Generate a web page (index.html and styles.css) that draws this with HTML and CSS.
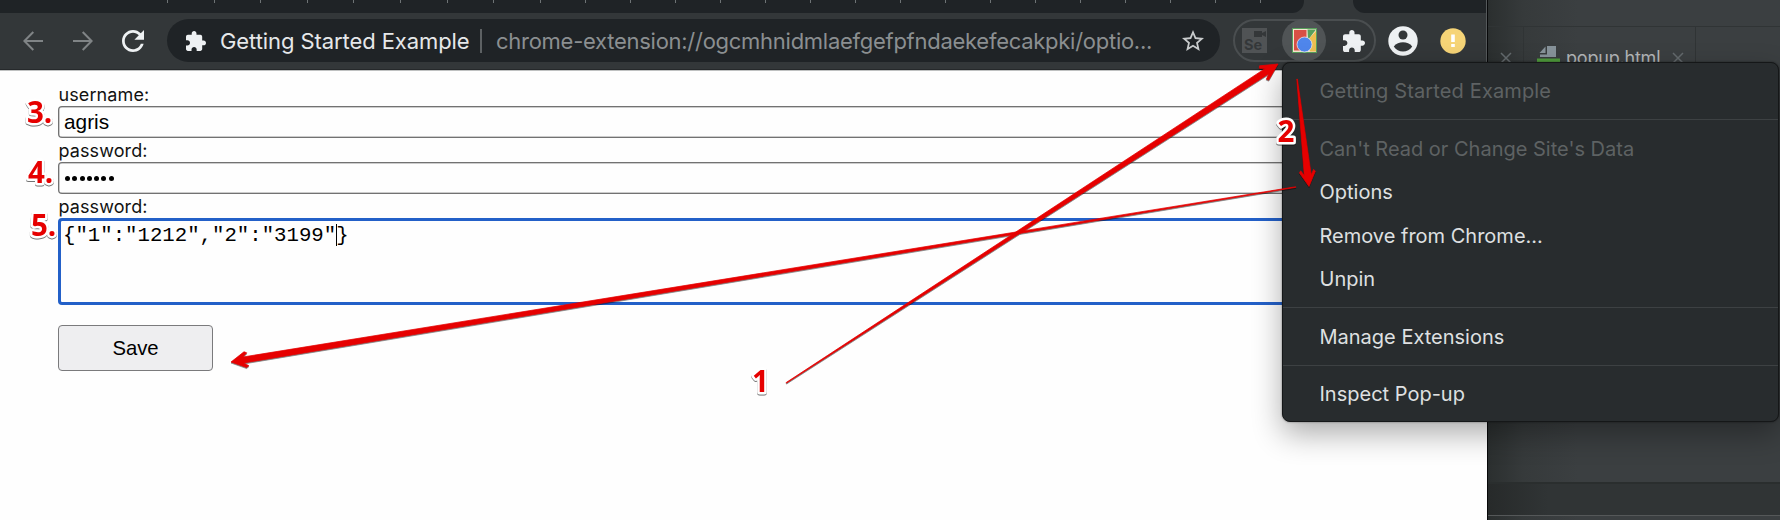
FILE: index.html
```html
<!DOCTYPE html>
<html lang="en">
<head>
<meta charset="utf-8">
<title>Getting Started Example</title>
<link rel="stylesheet" href="styles.css">
</head>
<body>
<div class="desktop">
  <main class="browser">
    <div class="tabstrip">
      <div class="tabs">
        <div class="ticks wide"><i></i><i></i><i></i><i></i><i></i><i></i><i></i><i></i></div>
        <div class="ticks"><i></i><i></i><i></i><i></i><i></i><i></i><i></i><i></i><i></i><i></i><i></i><i></i><i></i><i></i><i></i><i></i><i></i></div>
      </div>
      <div class="tabs-end"></div>
    </div>
    <div class="toolbar">
      <div class="nav">
        <svg width="20" height="20" viewBox="0 0 20 20" class="arrow"><path d="M20 10H1.5M10.3 1L1.4 10l8.9 9"/></svg>
        <svg width="20" height="20" viewBox="0 0 20 20" class="arrow"><path d="M0 10h18.5M9.7 1l8.9 9-8.9 9"/></svg>
        <svg width="22" height="22" viewBox="4 4 16 16" class="light"><path d="M17.65 6.35C16.2 4.9 14.21 4 12 4c-4.42 0-7.99 3.58-7.99 8s3.57 8 7.99 8c3.73 0 6.84-2.55 7.73-6h-2.08c-.82 2.33-3.04 4-5.65 4-3.31 0-6-2.69-6-6s2.690-6 6-6c1.660 0 3.140.69 4.220 1.780L13 11h7V4l-2.350 2.350z"/></svg>
      </div>
      <div class="omnibox">
        <svg width="20" height="20" viewBox="2 1 21 21" class="light"><path d="M20.5 11H19V7c0-1.1-.9-2-2-2h-4V3.5C13 2.12 11.88 1 10.5 1S8 2.12 8 3.5V5H4c-1.1 0-1.99.9-1.99 2v3.8H3.5c1.49 0 2.7 1.21 2.7 2.7s-1.21 2.7-2.7 2.7H2V20c0 1.1.9 2 2 2h3.8v-1.5c0-1.49 1.21-2.7 2.7-2.7 1.49 0 2.7 1.21 2.7 2.7V22H17c1.1 0 2-.9 2-2v-4h1.5c1.38 0 2.5-1.12 2.5-2.5S21.88 11 20.5 11z"/></svg>
        <span class="site">Getting Started Example</span>
        <span class="bar"></span>
        <span class="url">chrome-extension://ogcmhnidmlaefgefpfndaekefecakpki/optio...</span>
        <svg width="22" height="21" viewBox="2 2 20 19" class="star"><path d="M22 9.24l-7.19-.62L12 2 9.19 8.63 2 9.24l5.46 4.73L5.82 21 12 17.27 18.18 21l-1.63-7.03L22 9.24zM12 15.4l-3.76 2.27 1-4.28-3.32-2.88 4.38-.38L12 6.1l1.71 4.04 4.38.38-3.32 2.88 1 4.28L12 15.4z"/></svg>
      </div>
      <div class="extensions">
        <div class="selenium">
          <svg width="13" height="8" viewBox="0 0 13 8"><path d="M0 1h8v2l4-2v6l-4-2v2H0z"/></svg>
          <span>Se</span>
        </div>
        <div class="active-ext">
          <svg width="25" height="25" viewBox="0 0 25 25">
            <path fill="#57a05b" d="M0 0h25v25H0z"/>
            <path fill="#f4e7d2" d="M1 1h23v23H1z"/>
            <path fill="#d85045" d="M2 2h12.500v20.500H2z"/>
            <path fill="#57a05b" d="M15.500 1.500H24L16 12z"/>
            <path fill="#eebf51" d="M24 3v20.500h-6L15 13z"/>
            <circle cx="12.500" cy="16.500" r="7.500" fill="#4f86ec" stroke="#f4f4f4" stroke-width=".7"/>
          </svg>
        </div>
        <svg width="22" height="22" viewBox="2 1 21 21" class="light"><path d="M20.5 11H19V7c0-1.1-.9-2-2-2h-4V3.5C13 2.12 11.88 1 10.5 1S8 2.12 8 3.5V5H4c-1.1 0-1.99.9-1.99 2v3.8H3.5c1.49 0 2.7 1.21 2.7 2.7s-1.21 2.7-2.7 2.7H2V20c0 1.1.9 2 2 2h3.8v-1.5c0-1.49 1.21-2.7 2.7-2.7 1.49 0 2.7 1.21 2.7 2.7V22H17c1.1 0 2-.9 2-2v-4h1.5c1.38 0 2.5-1.12 2.5-2.5S21.88 11 20.5 11z"/></svg>
      </div>
      <svg width="30" height="30" viewBox="0 0 30 30" class="avatar"><circle cx="15" cy="15" r="14.700" fill="#eef1f3"/><circle cx="15" cy="9" r="4.500" fill="#333739"/><path fill="#333739" d="M5.800 20.500C8 17.300 11.500 16.300 15 16.300s7 1 9.200 4.200C22 23.700 18.800 25.500 15 25.500s-7-1.800-9.200-5z"/></svg>
      <svg width="26" height="26" viewBox="0 0 26 26" class="alert"><circle cx="13" cy="13" r="12.700" fill="#f6d477"/><path fill="#fff" d="M11.200 6.500h3.600v7.500h-3.600zM11.200 16h3.600v3h-3.600z"/></svg>
    </div>
    <form class="page">
      <label for="user">username:</label>
      <div class="field" id="user">agris</div>
      <label for="pass">password:</label>
      <div class="field" id="pass"><span class="dots"><b></b><b></b><b></b><b></b><b></b><b></b><b></b></span></div>
      <label for="codes">password:</label>
      <div class="codes" id="codes">{"1":"1212","2":"3199"<span class="caret"></span>}</div>
      <button type="button">Save</button>
    </form>
  </main>
  <aside class="editor">
    <div class="editor-top"></div>
    <div class="editor-tabs">
      <div class="etab first"><svg width="12" height="12" viewBox="0 0 12 12" class="close"><path d="M1 1l10 10M11 1L1 11"/></svg></div>
      <div class="etab file">
        <svg width="23" height="23" viewBox="0 0 23 23"><path fill="#87939a" d="M10 0h9v11H3V8.500h7z"/><path fill="#87939a" d="M8.500.5v6.500H2.500z"/><path fill="#4f9a3c" d="M0 12.500h23V23H0z"/></svg>
        <span>popup.html</span>
        <svg width="12" height="12" viewBox="0 0 12 12" class="close"><path d="M1 1l10 10M11 1L1 11"/></svg>
      </div>
    </div>
    <div class="editor-body"></div>
    <div class="editor-status"></div>
    <div class="editor-foot"></div>
  </aside>

  <nav class="menu">
    <div class="item off title">Getting Started Example</div>
    <hr>
    <div class="item off">Can't Read or Change Site's Data</div>
    <div class="item">Options</div>
    <div class="item">Remove from Chrome...</div>
    <div class="item">Unpin</div>
    <hr>
    <div class="item">Manage Extensions</div>
    <hr>
    <div class="item">Inspect Pop-up</div>
  </nav>

  <svg class="notes" width="1780" height="520" viewBox="0 0 1780 520">
    <g class="pointers">
      <path transform="translate(1278 64) rotate(-32.96)" d="M0 0L-16.500-8.500-18-6.500-13-3.200-586-.3V.3L-13 3.200-18 6.500-16.500 8.500z"/>
      <path transform="translate(231 362) rotate(170.67)" d="M0 0L-14.500-8-17-6.500-12.500-3-1079-.3V.3L-12.500 3-17 6.500-14.500 8z"/>
      <path transform="translate(1309 186.500) rotate(83.660)" d="M0 0L-14.500-8-16.500-6.500-11.500-3.500-108-.3V.3L-11.500 3.500-16.500 6.500-14.500 8z"/>
    </g>
    <g class="steps">
      <text x="27" y="122.500">3.</text>
      <text x="28" y="183">4.</text>
      <text x="31" y="236">5.</text>
      <text x="752" y="392">1</text>
      <text x="1277.500" y="142">2</text>
    </g>
  </svg>
</div>
</body>
</html>
```
FILE: styles.css
```css
* { box-sizing: border-box; }
body { margin: 0; font-family: Inter, "Liberation Sans", sans-serif; }
svg { display: block; flex: none; }

.desktop { position: relative; display: flex; width: 1780px; height: 520px; overflow: hidden; background: #3b3f41; }

.browser { display: flex; flex-direction: column; width: 1488px; background: #fefefe; border-right: 1px solid #08090a; }
.tabstrip { display: flex; justify-content: space-between; height: 13px; background: #333739; }
.tabs { display: flex; width: 1304px; padding-left: 167px; background: #1f2326; border-bottom-right-radius: 12px; }
.tabs-end { width: 134px; background: #1f2326; border-bottom-left-radius: 12px; border-right: 1px solid #55595b; }
.ticks { display: flex; gap: 44px; }
.ticks.wide { gap: 45.600px; margin-right: 45.500px; }
.ticks i { width: 1px; height: 3px; background: #6e7375; }

.toolbar { display: flex; align-items: center; height: 58px; padding: 0 20px 2px 23px; background: #333739; border-bottom: 1px solid #bfc1c1; border-right: 1px solid #55595b; box-shadow: inset 0 -1px #26292b; }
.nav { display: flex; flex: none; align-items: center; width: 144px; }
.arrow { margin-right: 30px; fill: none; stroke: #808486; stroke-width: 2; }
.nav .light { margin-left: -1px; }
.light { fill: #eef1f3; }
.omnibox { display: flex; flex: none; align-items: center; width: 1053px; height: 43px; padding: 0 16px 0 19px; border-radius: 22px; background: #1f2326; font-size: 22px; white-space: nowrap; }
.site { flex: none; width: 260px; margin-left: 14px; color: #e6e8ea; letter-spacing: -.08px; }
.bar { flex: none; width: 2px; height: 24px; margin: 0 14px 0 0; background: #5d6163; }
.url { flex: none; width: 686px; color: #8b8f91; letter-spacing: -.27px; }
.star { fill: #c9cccd; }
.extensions { display: flex; flex: none; align-items: center; width: 143px; height: 43px; margin-left: 13px; padding: 0 8px 0 7px; border: 2px solid #4a4e50; border-radius: 22px; }
.selenium { display: flex; flex: none; flex-direction: column; width: 25px; height: 25px; background: #505355; color: #343739; }
.selenium svg { align-self: flex-end; margin: 2px 0 0; fill: #343739; }
.selenium span { padding-left: 2px; font: bold 14.500px/14px Inter, sans-serif; }
.active-ext { display: flex; align-items: center; justify-content: center; flex: none; width: 44px; height: 43px; margin: 0 17px 0 15px; border-radius: 50%; background: #505456; }
.avatar { margin-left: 12px; }
.alert { margin-left: 22px; }

.page { display: flex; flex-direction: column; padding: 11px 0 0 58px; }
.page label { height: 24px; padding: 1px 0 0 .5px; color: #111; font-size: 18px; line-height: 23px; letter-spacing: .1px; }
.field { display: flex; align-items: center; height: 32px; padding: 0 5px 1px; border: 1px solid #727272; border-right: 0; border-radius: 4px 0 0 4px; box-shadow: inset 0 0 0 .5px #999; font: 20.800px/30px "Liberation Sans", Arial, sans-serif; color: #000; }
.dots { display: flex; gap: 2.300px; padding: 1px 0 0 1px; }
.dots b { width: 5px; height: 5px; border-radius: 50%; background: #000; }
.codes { height: 87px; padding: 3px 2px; border: 3px solid #2360c8; border-right: 0; border-radius: 4px 0 0 4px; font: 20.700px/24px "Liberation Mono", "Courier New", monospace; color: #000; }
.caret { display: inline-block; width: 1px; height: 22px; margin-right: -1px; vertical-align: -5px; background: #000; }
.page button { width: 155px; height: 46px; margin-top: 20px; padding: 0; border: 1.500px solid #7a7a7c; border-radius: 4px; background: #eeeef0; color: #000; font: 20.300px "Liberation Sans", Arial, sans-serif; }

.editor { display: flex; flex-direction: column; flex: 1; background: linear-gradient(90deg, #2b2f2f, #363a3b 35px, #3b3f41 90px); }
.editor-top { height: 26px; }
.editor-tabs { display: flex; height: 62px; border-top: 1px solid #303435; }
.etab { display: flex; align-items: center; border-right: 1px solid #303435; }
.first { width: 36px; padding-left: 12px; }
.file { width: 172px; padding-left: 13px; }
.file span { margin: 0 12px 0 6px; color: #b3b6b8; font-size: 18px; letter-spacing: -.2px; }
.close { fill: none; stroke: #646a6d; stroke-width: 1.500; }
.editor-body { flex: 1; }
.editor-status { height: 33px; border-top: 2px solid #2a2e2e; background: linear-gradient(90deg, #272a2a, #303435 60px); }
.editor-foot { height: 5px; border-top: 1px solid #555859; }

.menu { position: absolute; left: 1282px; top: 62px; width: 497px; height: 360px; padding-top: 6px; border: 1px solid #151718; border-radius: 8px; background: #282c2e; box-shadow: 0 0 2px rgba(0,0,0,.5), 0 12px 30px rgba(0,0,0,.32); color: #dfe0e1; font-size: 20px; }
.item { height: 43.500px; padding-left: 36.500px; line-height: 44px; }
.off { color: #5e6263; }
.title { letter-spacing: .13px; }
.menu hr { height: 1px; margin: 6.500px 0; border: 0; background: #3d4143; }

.notes { position: absolute; left: 0; top: 0; pointer-events: none; }
.pointers { fill: #e60000; stroke: #e60000; stroke-width: .7; stroke-linejoin: round; filter: drop-shadow(0 1px .7px rgba(0,0,0,.5)); }
.steps { fill: #e60000; stroke: #fff; stroke-width: 5px; stroke-linejoin: round; paint-order: stroke; font: bold 29.500px "Open Sans", "Noto Sans", sans-serif; filter: drop-shadow(0 1px .6px rgba(0,0,0,.55)); }
```
